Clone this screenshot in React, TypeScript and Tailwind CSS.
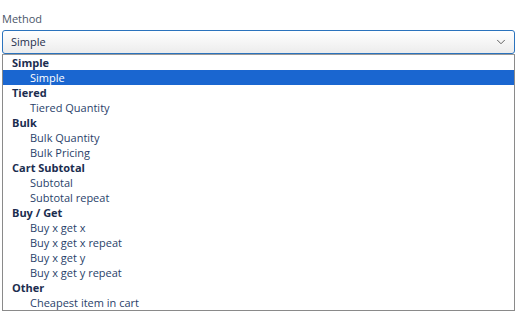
import { ChevronDown } from 'lucide-react';

const groups = [
  { label: 'Simple', options: ['Simple'] },
  { label: 'Tiered', options: ['Tiered Quantity'] },
  { label: 'Bulk', options: ['Bulk Quantity', 'Bulk Pricing'] },
  { label: 'Cart Subtotal', options: ['Subtotal', 'Subtotal repeat'] },
  { label: 'Buy / Get', options: ['Buy x get x', 'Buy x get x repeat', 'Buy x get y', 'Buy x get y repeat'] },
  { label: 'Other', options: ['Cheapest item in cart'] },
];

export default function App() {
  const selected = 'Simple';
  return (
    <div className="w-[516px] h-[312px] bg-white font-['Open_Sans',sans-serif] text-[11px] overflow-hidden">
      <div className="pt-[11px] pl-[2px] pr-[1px]">
        <label className="block text-[#4a5568] leading-[15px] mb-[4px]">Method</label>
        <div className="relative">
          <div className="h-[24px] flex items-center justify-between pl-[8px] pr-[6px] border border-[#2b73bd] rounded-[3px] bg-gradient-to-b from-white to-[#ececec] text-[#1e2f4d]">
            <span>{selected}</span>
            <ChevronDown className="w-[14px] h-[14px] text-[#555]" strokeWidth={1.6} />
          </div>
          <ul className="border border-[#8a8a8a] border-t-[#9a9a9a] bg-white h-[257px]">
            {groups.map((g) => (
              <li key={g.label}>
                <div className="h-[15px] leading-[15px] pl-[9px] font-bold text-[#1b2d4f]">{g.label}</div>
                <ul>
                  {g.options.map((o) => (
                    <li
                      key={o}
                      className={
                        o === selected && g.label === 'Simple'
                          ? 'h-[15px] leading-[15px] pl-[27px] bg-[#1a66d0] text-white'
                          : 'h-[15px] leading-[15px] pl-[27px] text-[#2a3f6a]'
                      }
                    >
                      {o}
                    </li>
                  ))}
                </ul>
              </li>
            ))}
          </ul>
        </div>
      </div>
    </div>
  );
}
